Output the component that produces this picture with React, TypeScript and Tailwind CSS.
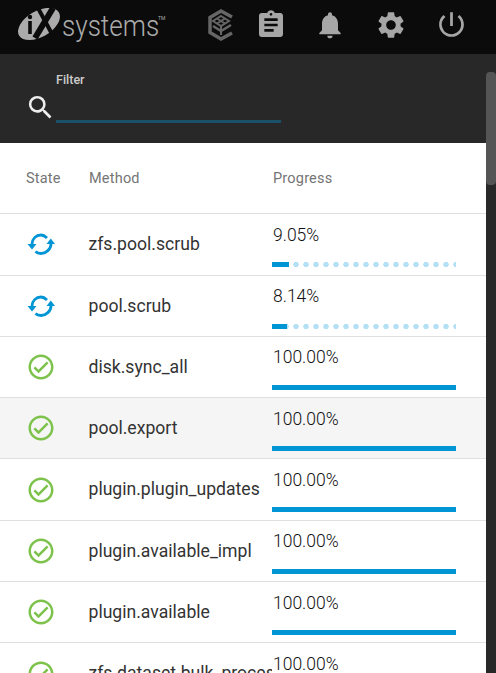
import React from 'react';
import { MdAssignment, MdNotifications, MdPowerSettingsNew, MdSearch, MdSettings } from 'react-icons/md';

const jobs = [
  { method: 'zfs.pool.scrub', percent: 9.05, running: true },
  { method: 'pool.scrub', percent: 8.14, running: true },
  { method: 'disk.sync_all', percent: 100 },
  { method: 'pool.export', percent: 100, hover: true },
  { method: 'plugin.plugin_updates', percent: 100 },
  { method: 'plugin.available_impl', percent: 100 },
  { method: 'plugin.available', percent: 100 },
  { method: 'zfs.dataset.bulk_process', percent: 100 },
];

const Logo = () => (
  <div className="flex w-[190px] shrink-0 items-start text-[#ababab]">
    <svg width="45" height="34" viewBox="0 0 45 34" className="mt-[8px]">
      <ellipse cx="22" cy="16" rx="23" ry="13" transform="rotate(-30 22 16)" fill="#ababab" />
      <path d="M21 0 L35 26" stroke="#0b0b0b" strokeWidth="4" />
      <path d="M36 0 L18 30" stroke="#0b0b0b" strokeWidth="6" />
      <circle cx="13" cy="9" r="2.2" fill="#0b0b0b" />
      <rect x="11.2" y="13" width="3.6" height="13" fill="#0b0b0b" />
    </svg>
    <span className="mt-[8px] w-[96px] origin-left scale-x-[0.87] text-[30px] leading-[36px] font-light">systems</span>
    <span className="mt-[15px] text-[5px] leading-[6px]">TM</span>
  </div>
);

const CubeLogo = () => (
  <svg width="28" height="32" viewBox="0 0 28 32" fill="none" stroke="#666666" strokeWidth="3.5">
    <path d="M25 8 L14 2 L3 8.5 V23.5 L14 30 L25 24" />
    <path d="M14 7 L22 12 L14 17 L6 12 Z M10 9.5 L18 14.5 M18 9.5 L10 14.5" strokeWidth="2" />
    <path d="M6 17 L14 22 L24 16" strokeWidth="2.5" />
    <path d="M14 17 V26" strokeWidth="2" />
  </svg>
);

const SyncIcon = () => (
  <svg width="28" height="22" viewBox="0 0 28 22" fill="none">
    <path d="M5 11 C5 6 9 2 14 2 C16 2 18 3 20 5" stroke="#0095d5" strokeWidth="2.8" />
    <path d="M24 11 C24 16 19 20.5 14 20.5 C12 20.5 10 20 8.5 18.5" stroke="#0095d5" strokeWidth="2.8" />
    <path d="M0.5 11 L9.5 11 L5 16.5 Z" fill="#0095d5" />
    <path d="M19.5 11 L28 11 L23.8 5.5 Z" fill="#0095d5" />
  </svg>
);

const CheckIcon = () => (
  <svg width="30" height="30" viewBox="0 0 24 24" fill="#7dc24b">
    <path d="M12 2C6.5 2 2 6.5 2 12S6.5 22 12 22 22 17.5 22 12 17.5 2 12 2M12 20C7.59 20 4 16.41 4 12S7.59 4 12 4 20 7.59 20 12 16.41 20 12 20M16.59 7.58L10 14.17L7.41 11.59L6 13L10 17L18 9L16.59 7.58Z" />
  </svg>
);

const ProgressBar = ({ percent }: { percent: number }) => (
  <div className="relative h-[5px] w-[184px] overflow-hidden bg-[radial-gradient(circle,#b3e0f5_2.4px,transparent_3px)] bg-[length:10px_5px] bg-[position:-1px_0]">
    <div className="h-full bg-[#0095d5]" style={{ width: `${percent}%` }} />
  </div>
);

export default function App() {
  return (
    <div className="flex h-[673px] w-[496px] flex-col overflow-hidden bg-[#282828] font-['Roboto',sans-serif]">
      {/* Top bar */}
      <header className="flex h-[54px] shrink-0 items-start bg-[#0b0b0b] pl-[17px]">
        <Logo />
        <div className="mt-[9px]">
          <CubeLogo />
        </div>
        <div className="ml-[20px] mt-[8px] flex items-center gap-[27px] text-[#a6a6a6]">
          <MdAssignment size={32} />
          <MdNotifications size={32} />
          <MdSettings size={32} className="ml-[2px]" />
          <MdPowerSettingsNew size={33} className="ml-[1px]" />
        </div>
      </header>

      <div className="flex min-h-0 flex-1">
        <div className="flex w-[486px] flex-col">
          {/* Filter */}
          <div className="flex h-[89px] shrink-0 items-end pb-[20px] pl-[25px]">
            <MdSearch size={31} className="text-[#eeeeee]" />
            <div className="w-[225px]">
              <div className="pb-[33px] text-[12.5px] leading-[14px] font-medium text-[#cccccc]">Filter</div>
              <div className="h-[3px] bg-[#1a5068]" />
            </div>
          </div>

          {/* Job table */}
          <div className="min-h-0 flex-1 bg-white">
            <div className="flex h-[71.3px] items-center border-b-[1.5px] border-[#e0e0e0] pt-[1px] text-[14.5px] tracking-[0.2px] text-[#757575]">
              <div className="w-[89px] pl-[26px]">State</div>
              <div className="w-[184px]">Method</div>
              <div>Progress</div>
            </div>
            {jobs.map((job) => (
              <div
                key={job.method}
                className={`flex h-[61.3px] items-center border-b-[1.5px] border-[#e0e0e0] text-[#333333] ${job.hover ? 'bg-[#f5f5f5]' : ''}`}
              >
                <div className="flex w-[88px] justify-center pr-[6px]">
                  {job.running ? <SyncIcon /> : <CheckIcon />}
                </div>
                <div className="w-[184px] overflow-hidden pl-[0.5px] text-[17.6px] whitespace-nowrap">{job.method}</div>
                <div className="flex h-full flex-col pt-[8.5px]">
                  <div className="pl-[1px] text-[17.5px] leading-[24px] font-light text-[#111111]">{job.percent.toFixed(2)}%</div>
                  <div className="mt-[15.5px]">
                    <ProgressBar percent={job.percent} />
                  </div>
                </div>
              </div>
            ))}
          </div>
        </div>

        {/* Scrollbar */}
        <div className="w-[10px] pt-[18px]">
          <div className="h-[113px] rounded-[4px] bg-[#555555]" />
        </div>
      </div>
    </div>
  );
}
